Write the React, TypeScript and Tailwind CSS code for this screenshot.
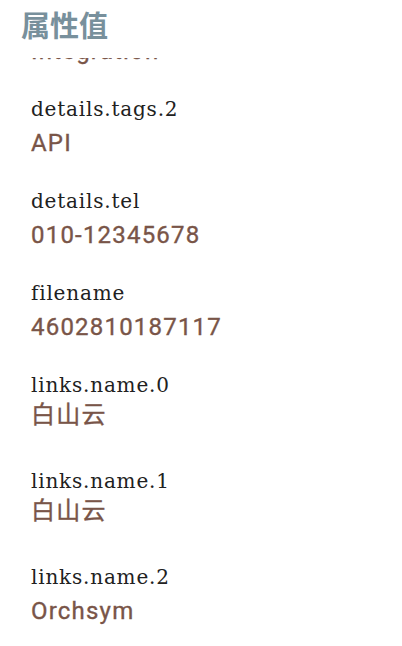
const items = [
  { label: 'details.tags.1', value: 'Integration' },
  { label: 'details.tags.2', value: 'API' },
  { label: 'details.tel', value: '010-12345678' },
  { label: 'filename', value: '4602810187117' },
  { label: 'links.name.0', value: '白山云', cjk: true },
  { label: 'links.name.1', value: '白山云', cjk: true },
  { label: 'links.name.2', value: 'Orchsym' },
  { label: 'links.url.0', value: 'https://www.baishancloud.com' },
];

function PropertyRow({ label, value, cjk }: { label: string; value: string; cjk?: boolean }) {
  return (
    <div className={cjk ? 'pl-[31px] pb-[37px]' : 'pl-[31px] pb-[29px]'}>
      <div className="font-['DejaVu_Serif',serif] text-[20px] leading-[28px] tracking-[0.8px] text-[#212121]">
        {label}
      </div>
      <div
        className={
          (cjk ? 'mt-[1px] ' : 'mt-[5px] ') +
          "font-['Roboto','Noto_Sans_CJK_SC',sans-serif] text-[24px] leading-[30px] font-normal tracking-[1.2px] text-[#795548] whitespace-nowrap [-webkit-text-stroke:0.35px_#795548]"
        }
      >
        {value}
      </div>
    </div>
  );
}

export default function App() {
  return (
    <div className="flex h-[646px] w-full flex-col overflow-hidden bg-white">
      {/* Header */}
      <div className="h-[58px] shrink-0 bg-white pl-[21px] pt-[4px]">
        <h1 className="font-['Noto_Sans_CJK_SC',sans-serif] text-[29px] leading-[40px] font-semibold text-[#78909c]">
          属性值
        </h1>
      </div>

      {/* List, scrolled under the header */}
      <div className="flex-1 overflow-hidden">
        <div className="-mt-[55px] flex flex-col">
          {items.map((item) => (
            <PropertyRow key={item.label} {...item} />
          ))}
        </div>
      </div>
    </div>
  );
}
